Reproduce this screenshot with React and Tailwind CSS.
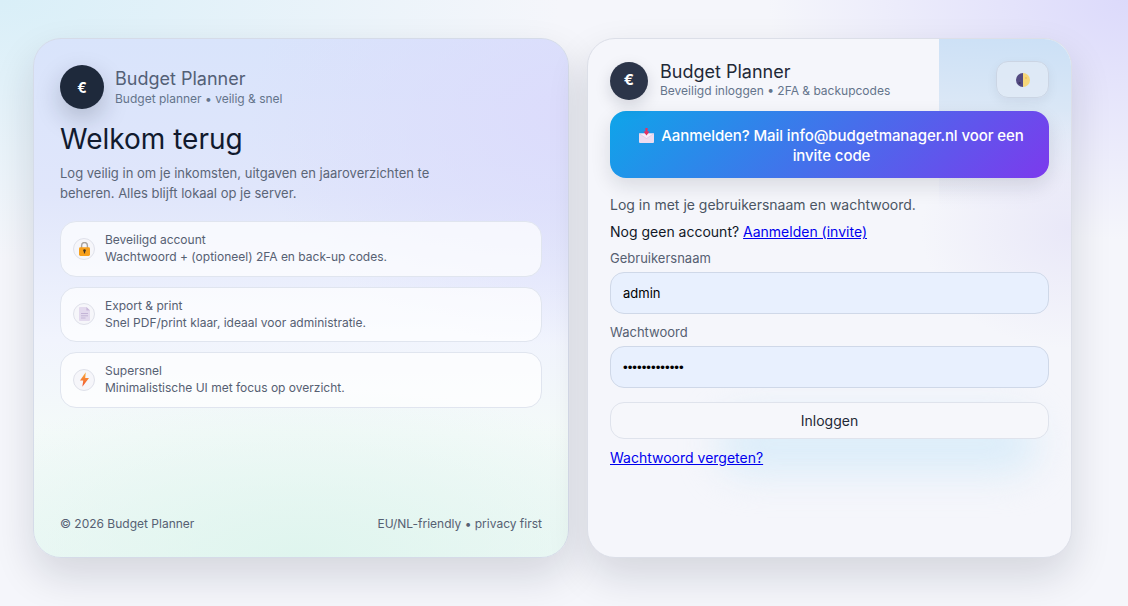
import React from "react";

const features = [
  { icon: <LockIcon />, title: "Beveiligd account", text: "Wachtwoord + (optioneel) 2FA en back-up codes." },
  { icon: <DocIcon />, title: "Export & print", text: "Snel PDF/print klaar, ideaal voor administratie." },
  { icon: <BoltIcon />, title: "Supersnel", text: "Minimalistische UI met focus op overzicht." },
];

function LockIcon() {
  return (
    <svg width="11" height="14" viewBox="0 0 11 14">
      <path d="M2.6 6V3.4a2.9 2.9 0 0 1 5.8 0V6" fill="none" stroke="#a8a29e" strokeWidth="1.4" />
      <rect x="0" y="5.2" width="11" height="8.8" rx="1.4" fill="#f7a01d" />
      <circle cx="5.5" cy="8.6" r="1.3" fill="#3f3226" />
      <rect x="4.9" y="8.8" width="1.2" height="2.6" fill="#3f3226" />
    </svg>
  );
}

function DocIcon() {
  return (
    <svg width="11" height="14" viewBox="0 0 11 14">
      <path d="M1 0h6.4L11 3.6V13a1 1 0 0 1-1 1H1a1 1 0 0 1-1-1V1a1 1 0 0 1 1-1z" fill="#e3daee" />
      <path d="M7.4 0L11 3.6H7.4z" fill="#c9b9da" />
      <path d="M2 6.5h7M2 8.8h7M2 11h4.5" stroke="#c0b0d2" strokeWidth="0.9" />
    </svg>
  );
}

function BoltIcon() {
  return (
    <svg width="9" height="15" viewBox="0 0 10 16">
      <defs>
        <linearGradient id="bolt" x1="0" y1="0" x2="0" y2="1">
          <stop offset="0" stopColor="#fbb03b" />
          <stop offset="1" stopColor="#f0502e" />
        </linearGradient>
      </defs>
      <path d="M6.4 0L0 9h3.6L2.6 16 10 6.4H5.8z" fill="url(#bolt)" />
    </svg>
  );
}

function MailIcon() {
  return (
    <svg width="15" height="15" viewBox="0 0 15 15" className="shrink-0">
      <path d="M0 5.5h15V14a1 1 0 0 1-1 1H1a1 1 0 0 1-1-1z" fill="#ecdcf0" />
      <path d="M0 5.5l7.5 5 7.5-5" fill="#f6ecf8" stroke="#d9c3e2" strokeWidth="0.6" />
      <path d="M6.4 0h2.2v3.6h1.9L7.5 7.6 4.5 3.6h1.9z" fill="#e8305f" />
    </svg>
  );
}

function ThemeIcon() {
  return (
    <svg width="14" height="14" viewBox="0 0 14 14">
      <path d="M7 0a7 7 0 0 0 0 14z" fill="#534a82" />
      <path d="M7 0a7 7 0 0 1 0 14z" fill="#f6d77a" />
      <circle cx="3.6" cy="10" r="1.1" fill="#3c3560" />
      <circle cx="10" cy="5" r="0.9" fill="#eebf57" />
    </svg>
  );
}

function EuroBadge({ className }) {
  return (
    <div className={`flex shrink-0 items-center justify-center rounded-full font-bold text-white ${className}`}>
      €
    </div>
  );
}

export default function App() {
  return (
    <div className="relative h-[606px] w-[1128px] overflow-hidden bg-[#f5f6fb] font-['Inter',sans-serif]">
      {/* page glows */}
      <div className="absolute inset-0 bg-[radial-gradient(560px_260px_at_0%_0%,#d9eff8,transparent)]" />
      <div className="absolute inset-0 bg-[radial-gradient(360px_240px_at_100%_0%,#dcdafb,transparent)]" />

      <div className="relative flex items-start gap-[18px] pl-[33px] pt-[38px]">
        {/* left card */}
        <section className="relative flex h-[520px] w-[536px] flex-col overflow-hidden rounded-[28px] border border-[#d5dbe8] bg-[linear-gradient(180deg,#d9e4fb_0%,#e0e6fb_30%,#f1f4fd_58%,#f4faf9_76%,#eef8f6_100%)] px-[26px] pt-[26px] pb-[25px] shadow-[0_18px_40px_rgba(15,23,42,0.14)]">
          <div className="absolute inset-0 bg-[radial-gradient(320px_230px_at_100%_15%,#dcdcfc,transparent)]" />
          <div className="absolute inset-0 bg-[radial-gradient(420px_170px_at_50%_100%,#dff5ee,transparent)]" />
          <div className="relative flex h-full flex-col">
            <div className="flex items-center gap-[11px]">
              <EuroBadge className="h-[44px] w-[44px] bg-[#1e293b] text-[14px] shadow-[0_10px_26px_rgba(15,23,42,0.22)]" />
              <div>
                <div className="text-[18px] leading-[22px] text-[#536076]">Budget Planner</div>
                <div className="mt-[1px] text-[12px] leading-[16px] text-[#64748b]">Budget planner • veilig &amp; snel</div>
              </div>
            </div>

            <h1 className="mt-[13px] text-[28px] leading-[34px] font-normal text-[#111a2e]">Welkom terug</h1>
            <p className="mt-[7px] w-[400px] text-[13px] leading-[20px] text-[#5b6577]">
              Log veilig in om je inkomsten, uitgaven en jaaroverzichten te beheren. Alles blijft lokaal op je server.
            </p>

            <div className="mt-[18px] flex flex-col gap-[10px]">
              {features.map((f) => (
                <div
                  key={f.title}
                  className="flex h-[55.5px] items-center gap-[10px] rounded-[16px] border border-[#e0e5ef] bg-white/70 px-[12px]"
                >
                  <div className="flex h-[22px] w-[22px] shrink-0 items-center justify-center rounded-full border border-[#dfe1ea] bg-[#f6f6fa]">
                    {f.icon}
                  </div>
                  <div className="pb-[1px] text-[12px] leading-[17px] text-[#566072]">
                    <div>{f.title}</div>
                    <div>{f.text}</div>
                  </div>
                </div>
              ))}
            </div>

            <div className="mt-auto flex justify-between text-[12px] leading-[16px] text-[#566072]">
              <span>© 2026 Budget Planner</span>
              <span>EU/NL-friendly • privacy first</span>
            </div>
          </div>
        </section>

        {/* right card */}
        <section className="relative h-[520px] w-[485px] overflow-hidden rounded-[28px] border border-[#dcdfe8] bg-[#f5f6fb] px-[22px] pt-[22px] shadow-[0_18px_40px_rgba(15,23,42,0.14)]">
          <div className="absolute top-0 right-0 h-[170px] w-[132px] bg-[linear-gradient(185deg,#cbe0f6_0%,#dae7f6_40%,#eef0fa_80%,#f5f6fb_100%)]" />
          <div className="absolute inset-0 bg-[radial-gradient(150px_120px_at_100%_190px,#e9e8f8,transparent)]" />
          <div className="absolute top-[375px] left-[130px] h-[60px] w-[320px] rounded-full bg-[#dcedf9] blur-[18px]" />
          <div className="relative">
            <div className="flex items-center gap-[12px]">
              <EuroBadge className="h-[38px] w-[38px] bg-[#2c3549] text-[15px] shadow-[0_6px_16px_rgba(15,23,42,0.15)]" />
              <div className="min-w-0 flex-1">
                <div className="text-[18px] leading-[19px] text-[#1f2937]">Budget Planner</div>
                <div className="mt-[2px] text-[12px] leading-[16px] text-[#64748b]">Beveiligd inloggen • 2FA &amp; backupcodes</div>
              </div>
              <button className="mb-[2px] flex h-[37px] w-[53px] items-center justify-center rounded-[12px] border border-[#cbd5e4] bg-[#e3ebf6]/70 shadow-[0_4px_12px_rgba(15,23,42,0.06)]">
                <ThemeIcon />
              </button>
            </div>

            <div className="mt-[11px] rounded-[16px] bg-[linear-gradient(135deg,#0ea5e9,#7c3aed)] pt-[15px] pr-[22px] pb-[12px] pl-[26px] text-center text-[15px] leading-[20px] font-medium tracking-[-0.08px] text-white shadow-[0_8px_20px_rgba(15,23,42,0.12)]">
              <span className="mr-[7px] inline-block align-[-2px]"><MailIcon /></span>
              Aanmelden? Mail info@budgetmanager.nl voor een invite code
            </div>

            <p className="mt-[18px] text-[14px] leading-[18px] text-[#4b5563]">Log in met je gebruikersnaam en wachtwoord.</p>
            <p className="mt-[9px] text-[14px] leading-[18px] text-[#111827]">
              Nog geen account? <a href="#" className="text-[#0000ee] underline">Aanmelden (invite)</a>
            </p>

            <label className="mt-[8px] block text-[13px] leading-[18px] text-[#566072]">Gebruikersnaam</label>
            <input
              readOnly
              value="admin"
              className="mt-[5px] block h-[42px] w-full rounded-[14px] border border-[#cfd8e8] bg-[#e8f0fe] px-[12px] text-[13px] text-black outline-none"
            />
            <label className="mt-[9px] block text-[13px] leading-[18px] text-[#566072]">Wachtwoord</label>
            <input
              readOnly
              type="password"
              value="adminpassword"
              className="mt-[5px] block h-[42px] w-full rounded-[14px] border border-[#cfd8e8] bg-[#e8f0fe] px-[12px] font-['Liberation_Sans',sans-serif] text-[13.33px] text-black outline-none"
            />
            <button className="mt-[14px] block h-[37px] w-full rounded-[14px] border border-[#dfe3ec] bg-[#f6f7fb] text-[14px] text-[#1f2937]">
              Inloggen
            </button>
            <a href="#" className="mt-[10px] inline-block text-[14px] leading-[18px] text-[#0000ee] underline">Wachtwoord vergeten?</a>
          </div>
        </section>
      </div>
    </div>
  );
}
